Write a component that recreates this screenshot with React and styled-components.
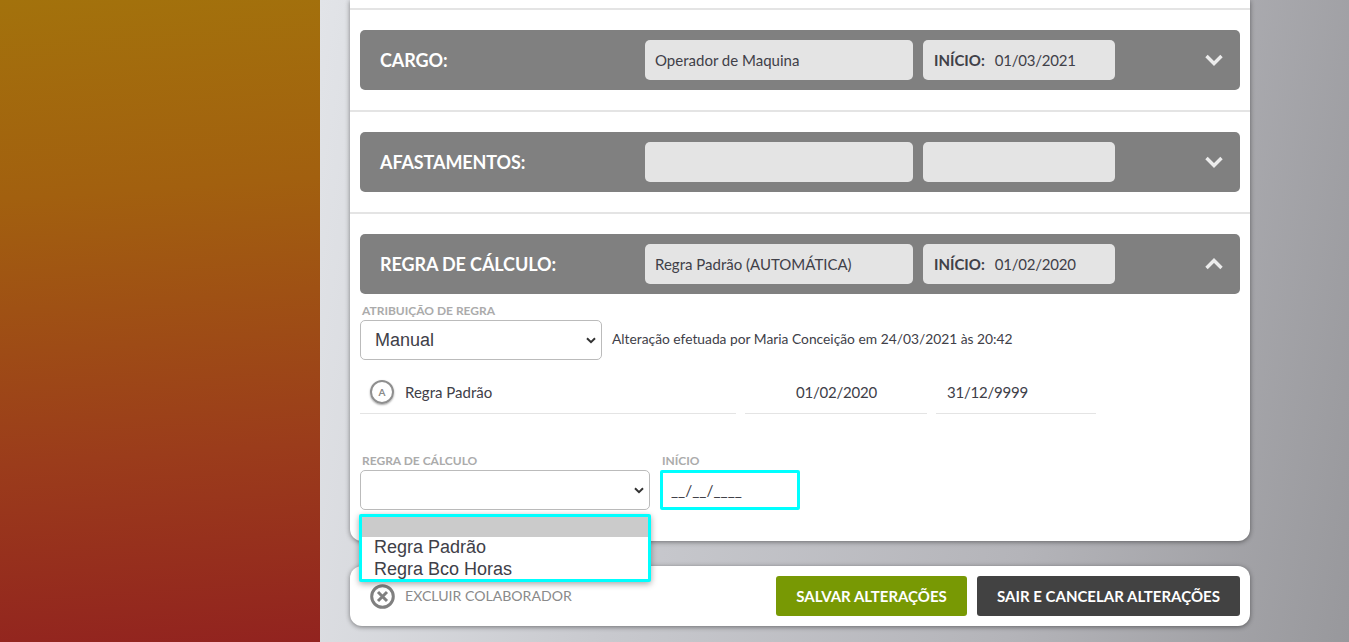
import React from 'react'
import styled, { createGlobalStyle } from 'styled-components'

const Global = createGlobalStyle`
  html, body {
    margin: 0;
    padding: 0;
    height: 100%;
    overflow: hidden;
  }
  body {
    font-family: Lato, 'Liberation Sans', sans-serif;
    color: #404048;
  }
`

const Page = styled.div`
  display: flex;
  width: 1349px;
  height: 642px;
  overflow: hidden;
`
const Sidebar = styled.aside`
  width: 320px;
  flex: none;
  background: linear-gradient(176deg, #a3720c 0%, #a2600f 30%, #9b3c1b 70%, #92231f 100%);
`
const Main = styled.main`
  flex: 1;
  padding: 0 99px 0 30px;
  background: linear-gradient(100deg, #e2e4e8 0%, #c8c9ce 35%, #b4b4b9 70%, #98989c 100%);
`
const Card = styled.div`
  position: relative;
  background: #fff;
  border-radius: 0 0 12px 12px;
  box-shadow: 0 1px 5px rgba(0, 0, 0, 0.45);
  padding-top: 8px;
  height: 541px;
  box-sizing: border-box;
`
const Section = styled.section`
  border-top: 2px solid #e4e4e4;
  padding: 20px 10px;
`
const Head = styled.div`
  display: flex;
  align-items: center;
  height: 60px;
  padding: 0 16px 0 20px;
  background: #808080;
  border-radius: 5px;
`
const Title = styled.h2`
  width: 265px;
  margin: 0;
  font: 700 18px Lato, sans-serif;
  letter-spacing: -0.1px;
  color: #fff;
`
const Field = styled.div`
  display: flex;
  align-items: center;
  box-sizing: border-box;
  width: ${p => p.$w}px;
  height: 40px;
  margin-right: 10px;
  padding: 0 ${p => p.$pad}px;
  background: #e4e4e4;
  border-radius: 5px;
  font-size: 15px;
  white-space: nowrap;
`
const FieldLabel = styled.b`
  margin-right: 10px;
  font-weight: 700;
`
const Digits = styled.span`
  letter-spacing: -0.22px;
`
const Toggle = styled.svg`
  width: 20px;
  height: 14px;
  margin-left: auto;
`
const Body = styled.div`
  margin-top: 10px;
`
const Label = styled.label`
  display: block;
  margin-bottom: 2px;
  padding-left: 2px;
  font: 700 12px/14px Lato, sans-serif;
  color: #ababab;
`
const Line = styled.div`
  display: flex;
  align-items: center;
  gap: 10px;
`
const Select = styled.select`
  appearance: none;
  box-sizing: border-box;
  width: ${p => p.$w}px;
  height: 40px;
  padding: 0 14px;
  background: #fff url("data:image/svg+xml,%3Csvg xmlns='http://www.w3.org/2000/svg' width='10' height='7'%3E%3Cpath d='M1 1.2l4 4 4-4' fill='none' stroke='%23333' stroke-width='2'/%3E%3C/svg%3E") no-repeat right 5px center;
  border: 1px solid #bbb;
  border-radius: 5px;
  font: 18px 'Liberation Sans', sans-serif;
  color: #404048;
`
const Note = styled.span`
  margin-top: -4px;
  font-size: 13.8px;
`
const RuleRow = styled.div`
  display: flex;
  gap: 9px;
  margin-top: 12px;
`
const RuleCell = styled.div`
  display: flex;
  align-items: center;
  box-sizing: border-box;
  width: ${p => p.$w}px;
  height: 42px;
  padding: 0 0 2px ${p => p.$pad}px;
  border-bottom: 1px solid #e4e4e4;
  font-size: 15px;
`
const Badge = styled.span`
  display: flex;
  align-items: center;
  justify-content: center;
  box-sizing: border-box;
  width: 24px;
  height: 24px;
  margin-right: 11px;
  border: 2.5px solid #8f8f8f;
  border-radius: 50%;
  box-shadow: 0 1px 2px rgba(0, 0, 0, 0.35);
  font: 700 10px Lato, sans-serif;
  color: #8a8a8a;
`
const NewRule = styled.div`
  display: flex;
  gap: 10px;
  margin-top: 40px;
`
const DateInput = styled.input`
  box-sizing: border-box;
  width: 140px;
  height: 40px;
  padding: 0 8px;
  border: 3px solid #00ffff;
  border-radius: 2px;
  outline: none;
  font: 15.5px Lato, sans-serif;
  color: #404048;
`
const ListBox = styled.div`
  position: absolute;
  left: 9px;
  top: 514px;
  z-index: 2;
  box-sizing: border-box;
  width: 292px;
  height: 68px;
  background: #fff;
  border: 3px solid #00ffff;
  border-radius: 2px;
  box-shadow: 0 2px 6px rgba(0, 0, 0, 0.35);
  font: 18px/20px 'Liberation Sans', sans-serif;
`
const Option = styled.div`
  height: ${p => (p.$blank ? 20 : 22)}px;
  padding-left: 12px;
  background: ${p => (p.$blank ? '#cbcbcb' : 'transparent')};
`
const Footer = styled.div`
  display: flex;
  align-items: center;
  gap: 10px;
  height: 60px;
  margin-top: 25px;
  padding: 0 10px 0 20px;
  background: #fff;
  border-radius: 12px;
  box-shadow: 0 1px 5px rgba(0, 0, 0, 0.45);
`
const Delete = styled.div`
  display: flex;
  align-items: center;
  gap: 10px;
  margin-right: auto;
  font-size: 14.1px;
  color: #8a8a8a;
`
const DeleteText = styled.span`
  margin-top: -2px;
`
const Button = styled.button`
  width: ${p => p.$w}px;
  height: 40px;
  padding: 0;
  border: 0;
  border-radius: 3px;
  background: ${p => p.$bg};
  font: 700 15px Lato, sans-serif;
  color: #fff;
`

const Chevron = ({ up }) => (
  <Toggle viewBox="0 0 20 14">
    <path
      d={up ? 'M2.5 11 10 3.5 17.5 11' : 'M2.5 3 10 10.5 17.5 3'}
      fill="none"
      stroke="#ececec"
      strokeWidth="3.4"
    />
  </Toggle>
)

const CloseIcon = () => (
  <svg width="25" height="25" viewBox="0 0 25 25">
    <circle cx="12.5" cy="12.5" r="10.8" fill="none" stroke="#808080" strokeWidth="3" />
    <path d="M8 8l9 9M17 8l-9 9" fill="none" stroke="#808080" strokeWidth="3" />
  </svg>
)

const Header = ({ title, value, date, up }) => (
  <Head>
    <Title>{title}</Title>
    <Field $w={268} $pad={10}>{value}</Field>
    <Field $w={192} $pad={11}>
      {date && <FieldLabel>INÍCIO:</FieldLabel>}
      <Digits>{date}</Digits>
    </Field>
    <Chevron up={up} />
  </Head>
)

export default function App() {
  return (
    <Page>
      <Global />
      <Sidebar />
      <Main>
        <Card>
          <Section>
            <Header title="CARGO:" value="Operador de Maquina" date="01/03/2021" />
          </Section>
          <Section>
            <Header title="AFASTAMENTOS:" />
          </Section>
          <Section>
            <Header
              title="REGRA DE CÁLCULO:"
              value="Regra Padrão (AUTOMÁTICA)"
              date="01/02/2020"
              up
            />
            <Body>
              <Label>ATRIBUIÇÃO DE REGRA</Label>
              <Line>
                <Select $w={242} defaultValue="Manual">
                  <option>Manual</option>
                  <option>Automática</option>
                </Select>
                <Note>Alteração efetuada por Maria Conceição em 24/03/2021 às 20:42</Note>
              </Line>
              <RuleRow>
                <RuleCell $w={376} $pad={10}>
                  <Badge>A</Badge>
                  Regra Padrão
                </RuleCell>
                <RuleCell $w={182} $pad={51}><Digits>01/02/2020</Digits></RuleCell>
                <RuleCell $w={160} $pad={11}><Digits>31/12/9999</Digits></RuleCell>
              </RuleRow>
              <NewRule>
                <div>
                  <Label>REGRA DE CÁLCULO</Label>
                  <Select $w={290} defaultValue="">
                    <option value="" />
                  </Select>
                </div>
                <div>
                  <Label>INÍCIO</Label>
                  <DateInput defaultValue="__/__/____" />
                </div>
              </NewRule>
            </Body>
          </Section>
          <ListBox>
            <Option $blank />
            <Option>Regra Padrão</Option>
            <Option>Regra Bco Horas</Option>
          </ListBox>
        </Card>
        <Footer>
          <Delete>
            <CloseIcon />
            <DeleteText>EXCLUIR COLABORADOR</DeleteText>
          </Delete>
          <Button $w={191} $bg="#789904">SALVAR ALTERAÇÕES</Button>
          <Button $w={263} $bg="#424242">SAIR E CANCELAR ALTERAÇÕES</Button>
        </Footer>
      </Main>
    </Page>
  )
}
